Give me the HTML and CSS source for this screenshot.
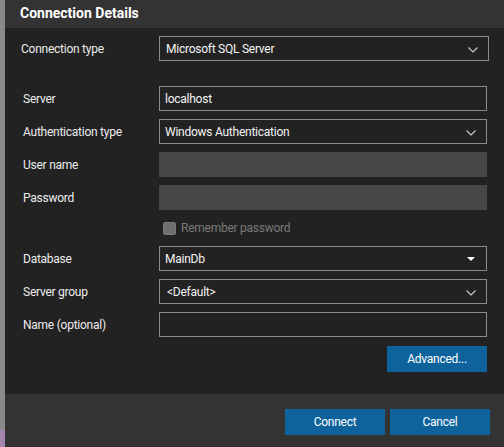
FILE: index.html
```html
<!DOCTYPE html>
<html lang="en">
  <head>
    <meta charset="UTF-8" />
    <meta name="viewport" content="width=device-width, initial-scale=1.0" />
    <title>Connection Details</title>
    <link rel="stylesheet" href="styles.css">
  </head>

  <body>
    <div class="backdrop"></div>
    <div class="dialog">
      <div class="dialog-header">Connection Details</div>

      <div class="dialog-body">
        <div class="form-grid type-grid">
          <label class="form-label">Connection type</label>
          <div class="select-box wide">
            <span>Microsoft SQL Server</span>
            <svg class="chevron" width="10" height="6" viewBox="0 0 10 6">
              <path d="M0.5 0.5 L5 5 L9.5 0.5" fill="none" stroke="#cccccc" stroke-width="1.1" />
            </svg>
          </div>
        </div>

        <div class="form-grid details-grid">
          <label class="form-label">Server</label>
          <div class="text-box">localhost</div>

          <label class="form-label">Authentication type</label>
          <div class="select-box">
            <span>Windows Authentication</span>
            <svg class="chevron" width="10" height="6" viewBox="0 0 10 6">
              <path d="M0.5 0.5 L5 5 L9.5 0.5" fill="none" stroke="#cccccc" stroke-width="1.1" />
            </svg>
          </div>

          <label class="form-label">User name</label>
          <div class="text-box disabled"></div>

          <label class="form-label">Password</label>
          <div class="text-box disabled"></div>

          <span></span>
          <div class="checkbox-row">
            <span class="checkbox"></span>
            <span>Remember password</span>
          </div>

          <label class="form-label">Database</label>
          <div class="select-box">
            <span>MainDb</span>
            <svg class="caret" width="8" height="4" viewBox="0 0 8 4">
              <path d="M0 0 L8 0 L4 4 Z" fill="#ffffff" />
            </svg>
          </div>

          <label class="form-label">Server group</label>
          <div class="select-box">
            <span class="group-value">&lt;Default&gt;</span>
            <svg class="chevron" width="10" height="6" viewBox="0 0 10 6">
              <path d="M0.5 0.5 L5 5 L9.5 0.5" fill="none" stroke="#cccccc" stroke-width="1.1" />
            </svg>
          </div>

          <label class="form-label">Name (optional)</label>
          <div class="text-box"></div>
        </div>

        <div class="advanced-row">
          <button class="btn">Advanced...</button>
        </div>
      </div>

      <div class="dialog-footer">
        <button class="btn">Connect</button>
        <button class="btn">Cancel</button>
      </div>
    </div>
  </body>
</html>
```

FILE: styles.css
```css
html,
body {
  margin: 0;
  height: 100%;
}

body {
  font-family: Roboto, "Noto Sans", sans-serif;
  font-size: 12px;
  letter-spacing: -0.25px;
  color: #e8e8e8;
  background-color: #8a8a8a;
  display: flex;
  overflow: hidden;
}

.backdrop {
  width: 5px;
  flex-shrink: 0;
  background: linear-gradient(#8a8a8a 0, #8a8a8a 430px, #a386ad 430px);
}

.dialog {
  flex: 1;
  display: flex;
  flex-direction: column;
  background-color: #222222;
}

.dialog-header {
  height: 28px;
  box-sizing: border-box;
  padding: 5px 0 0 15px;
  background-color: #333333;
  color: #ffffff;
  font-size: 14px;
  font-weight: 700;
  letter-spacing: 0;
}

.dialog-body {
  height: 366px;
  box-sizing: border-box;
  padding-top: 8px;
}

.form-grid {
  display: grid;
  grid-template-columns: 136px 328px;
  grid-auto-rows: 25px;
  row-gap: 8px;
  padding-left: 18px;
  align-items: center;
}

.type-grid {
  grid-template-columns: 138px 330px;
  padding-left: 16px;
  margin-bottom: 25px;
}

.details-grid {
  grid-template-rows: repeat(4, 25px) 20px repeat(3, 25px);
}

.form-label {
  color: #ececec;
}

.select-box,
.text-box {
  height: 25px;
  box-sizing: border-box;
  border: 1px solid #8b8b8b;
  display: flex;
  align-items: center;
  justify-content: space-between;
  padding: 0 10px 0 5px;
  color: #f4f4f4;
}

.select-box.wide {
  padding-left: 6px;
}

.text-box.disabled {
  border-color: #464646;
  background-color: #464646;
}

.group-value {
  padding-left: 2px;
}

.chevron {
  margin-top: 2px;
}

.caret {
  margin-right: 1px;
}

.checkbox-row {
  display: flex;
  align-items: center;
  gap: 5px;
  padding-left: 4px;
  color: #7a7a7a;
  height: 20px;
}

.checkbox {
  width: 11px;
  height: 11px;
  border: 1px solid #7a7a7a;
  background-color: #6f6f6f;
  border-radius: 2px;
}

.advanced-row {
  display: flex;
  justify-content: flex-end;
  width: 482px;
  margin-top: 9px;
}

.btn {
  width: 100px;
  height: 26px;
  border: none;
  background-color: #0e639c;
  color: #ffffff;
  font-family: Roboto, "Noto Sans", sans-serif;
  font-size: 12px;
  letter-spacing: -0.25px;
  padding: 0;
}

.dialog-footer {
  flex: 1;
  display: flex;
  justify-content: flex-end;
  align-items: flex-start;
  gap: 5px;
  padding: 15px 14px 0 0;
  background-color: #333333;
}
```
